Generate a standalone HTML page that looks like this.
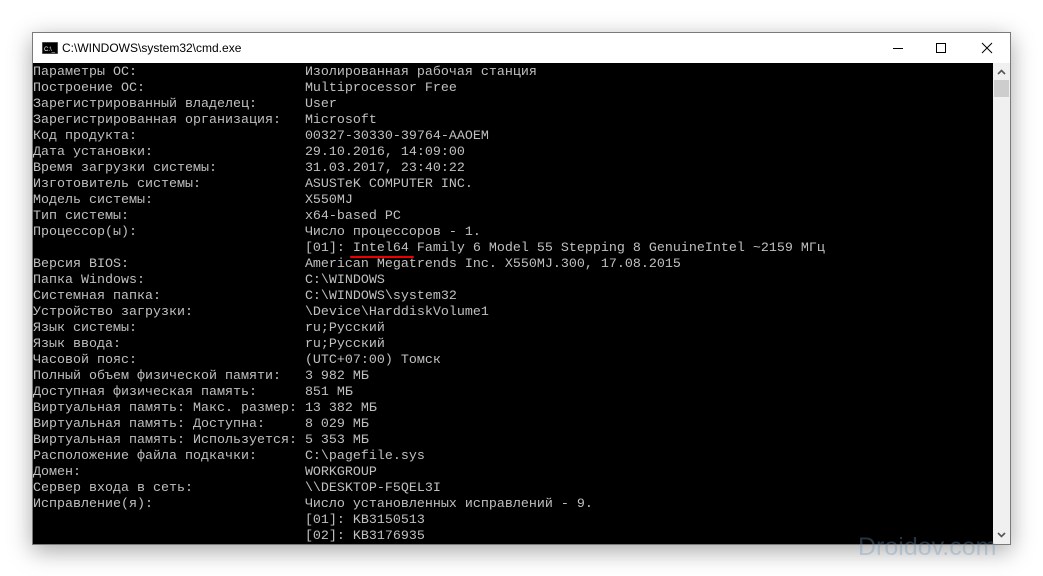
<!DOCTYPE html>
<html><head><meta charset="utf-8"><style>
body{margin:0;width:1043px;height:576px;background:#fff;position:relative;overflow:hidden;font-family:"Liberation Sans",sans-serif}
.win{position:absolute;left:32px;top:32px;width:977px;height:511px;border:1px solid #7a7a7a;background:#fff;box-shadow:0 6px 22px rgba(0,0,0,.35)}
.title{position:absolute;left:0;top:0;width:977px;height:30px;background:#fff}
.title .t{position:absolute;left:29px;top:8px;font-size:12px;color:#000}
.con{position:absolute;left:0;top:30px;width:960px;height:481px;background:#000;overflow:hidden}
pre{margin:0;position:absolute;left:0;top:2px;font-family:"Liberation Mono","DejaVu Sans Mono",monospace;font-size:13.33px;line-height:16px;color:#c0c0c0}
.sb{position:absolute;left:960px;top:30px;width:17px;height:481px;background:#f0f0f0}
</style></head><body>
<div class="win">
<div class="title">
<svg style="position:absolute;left:9px;top:9px" width="16" height="12"><rect x="0" y="0" width="16" height="12" fill="#000" stroke="#888"/><text x="2" y="9" font-size="6" fill="#fff" font-family="Liberation Sans">C:\_</text></svg>
<div class="t">C:\WINDOWS\system32\cmd.exe</div>
<svg style="position:absolute;left:0;top:6px" width="977" height="20"><line x1="860" y1="9.5" x2="870" y2="9.5" stroke="#000"/><rect x="903.5" y="4.5" width="9" height="9" fill="none" stroke="#000"/><path d="M949 4L959 14M959 4L949 14" stroke="#000"/></svg>
</div>
<div class="con"><pre>Параметры ОС:                     Изолированная рабочая станция
Построение ОС:                    Multiprocessor Free
Зарегистрированный владелец:      User
Зарегистрированная организация:   Microsoft
Код продукта:                     00327-30330-39764-AAOEM
Дата установки:                   29.10.2016, 14:09:00
Время загрузки системы:           31.03.2017, 23:40:22
Изготовитель системы:             ASUSTeK COMPUTER INC.
Модель системы:                   X550MJ
Тип системы:                      x64-based PC
Процессор(ы):                     Число процессоров - 1.
                                  [01]: Intel64 Family 6 Model 55 Stepping 8 GenuineIntel ~2159 МГц
Версия BIOS:                      American Megatrends Inc. X550MJ.300, 17.08.2015
Папка Windows:                    C:\WINDOWS
Системная папка:                  C:\WINDOWS\system32
Устройство загрузки:              \Device\HarddiskVolume1
Язык системы:                     ru;Русский
Язык ввода:                       ru;Русский
Часовой пояс:                     (UTC+07:00) Томск
Полный объем физической памяти:   3 982 МБ
Доступная физическая память:      851 МБ
Виртуальная память: Макс. размер: 13 382 МБ
Виртуальная память: Доступна:     8 029 МБ
Виртуальная память: Используется: 5 353 МБ
Расположение файла подкачки:      C:\pagefile.sys
Домен:                            WORKGROUP
Сервер входа в сеть:              \\DESKTOP-F5QEL3I
Исправление(я):                   Число установленных исправлений - 9.
                                  [01]: KB3150513
                                  [02]: KB3176935</pre>
<div style="position:absolute;left:317px;top:193px;width:64px;height:2px;background:#e00;border-radius:1px"></div>
</div>
<div class="sb">
<svg style="position:absolute;left:4px;top:6px" width="9" height="6"><path d="M1 5L4.5 1.5L8 5" stroke="#555" stroke-width="1.6" fill="none"/></svg>
<div style="position:absolute;left:1px;top:17px;width:15px;height:17px;background:#cdcdcd"></div>
<svg style="position:absolute;left:4px;top:469px" width="9" height="6"><path d="M1 1L4.5 4.5L8 1" stroke="#555" stroke-width="1.6" fill="none"/></svg>
</div>
</div>
<div style="position:absolute;left:858px;top:533px;font-size:25px;color:rgba(110,150,190,.35)">Droidov.com</div>
</body></html>
